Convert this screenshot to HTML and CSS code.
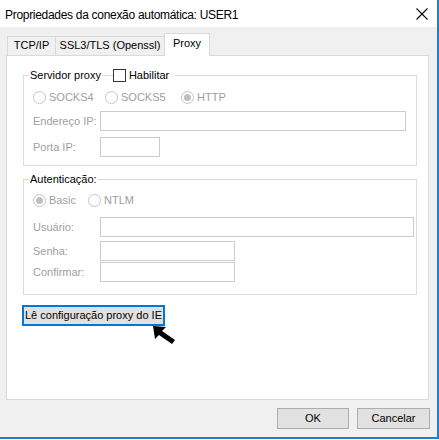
FILE: index.html
```html
<!DOCTYPE html>
<html lang="pt">
<head>
<meta charset="utf-8">
<title>Propriedades</title>
<link rel="stylesheet" href="styles.css">
</head>
<body>
<div class="window">
  <div class="titlebar">
    <span class="title">Propriedades da conexão automática: USER1</span>
    <svg class="close" width="12" height="12" viewBox="0 0 12 12"><path d="M0.5 0.5 L11.5 11.5 M11.5 0.5 L0.5 11.5" stroke="#000" stroke-width="1.1" fill="none"/></svg>
  </div>
  <div class="tabs">
    <div class="tab t1">TCP/IP</div>
    <div class="tab t2">SSL3/TLS (Openssl)</div>
    <div class="tab t3 active">Proxy</div>
  </div>
  <div class="panel">
    <fieldset class="group g1">
      <legend class="legend">
        <span class="lg-text">Servidor proxy</span>
        <span class="lg-line"></span>
        <span class="check"></span>
        <span class="lg-text lg-check">Habilitar</span>
      </legend>
      <div class="row radios r1">
        <span class="radio-item w72"><span class="radio"></span>SOCKS4</span>
        <span class="radio-item w76"><span class="radio"></span>SOCKS5</span>
        <span class="radio-item"><span class="radio checked"></span>HTTP</span>
      </div>
      <div class="row field f1"><span class="label">Endereço IP:</span><span class="input w306"></span></div>
      <div class="row field f2"><span class="label">Porta IP:</span><span class="input w60"></span></div>
    </fieldset>
    <fieldset class="group g2">
      <legend class="legend"><span class="lg-text">Autenticação:</span></legend>
      <div class="row radios r2">
        <span class="radio-item w55"><span class="radio checked"></span>Basic</span>
        <span class="radio-item"><span class="radio"></span>NTLM</span>
      </div>
      <div class="row field f3"><span class="label">Usuário:</span><span class="input w314"></span></div>
      <div class="row field f4"><span class="label">Senha:</span><span class="input w135"></span></div>
      <div class="row field f5"><span class="label">Confirmar:</span><span class="input w135"></span></div>
    </fieldset>
    <div class="ie-btn">Lê configuração proxy do IE</div>
  </div>
  <div class="footer">
    <div class="btn ok">OK</div>
    <div class="btn cancel">Cancelar</div>
  </div>
  <svg class="cursor" width="30" height="24" viewBox="0 0 30 24"><polygon points="4,3 17,4 13,8 26,17 23,21 10,12 6,16" fill="#000"/></svg>
</div>
</body>
</html>
```
FILE: styles.css
```css
html, body {
  margin: 0;
  padding: 0;
  background: #ffffff;
}
body {
  font-family: "Liberation Sans", Arial, sans-serif;
  font-size: 11px;
  color: #000;
}
.window {
  position: relative;
  width: 437px;
  height: 437px;
  background: #f0f0f0;
  border-right: 2px solid #1f7fd0;
  border-bottom: 2px solid #1f7fd0;
}
.titlebar {
  height: 27px;
  background: #ffffff;
  display: flex;
  align-items: center;
  justify-content: space-between;
  padding: 0 9px 0 5px;
  box-sizing: border-box;
  font-size: 12px;
}
.title { padding-top: 2px; letter-spacing: -0.3px; }
.close { display: block; margin-top: 1px; }
.tabs {
  display: flex;
  align-items: flex-end;
  height: 22px;
  margin-top: 6px;
  padding-left: 7px;
}
.tab {
  box-sizing: border-box;
  height: 19px;
  line-height: 17px;
  border: 1px solid #d9d9d9;
  border-bottom: none;
  background: #f0f0f0;
  margin-right: -1px;
  text-align: center;
}
.t1 { width: 49px; }
.t2 { width: 110px; }
.t3 { width: 46px; }
.tab.active {
  position: relative;
  z-index: 1;
  height: 23px;
  margin-bottom: -1px;
  background: #ffffff;
  line-height: 19px;
}
.panel {
  box-sizing: border-box;
  margin-left: 6px;
  width: 423px;
  height: 345px;
  border: 1px solid #d9d9d9;
  background: #ffffff;
  padding: 12px 0 0 16px;
}
.group {
  box-sizing: border-box;
  width: 394px;
  min-width: 0;
  margin: 0;
  padding: 0 0 0 9px;
  border: 1px solid #dcdcdc;
}
.g1 { padding-bottom: 8px; }
.g2 { margin-top: 6px; padding-bottom: 12px; }
.legend {
  display: flex;
  align-items: center;
  height: 14px;
  line-height: 14px;
  padding: 0 1px;
  margin-left: -4px;
}
.g1 .legend { padding-right: 6px; }
.lg-line {
  width: 11px;
  height: 1px;
  background: #dcdcdc;
  margin: 1px 0 0 1px;
}
.check {
  box-sizing: border-box;
  width: 13px;
  height: 13px;
  border: 1px solid #333333;
  background: #fff;
  margin-right: 3px;
}
.row {
  display: flex;
  align-items: center;
  color: #a0a0a0;
}
.radios { height: 14px; }
.r1 { margin-top: 8px; }
.r2 { margin-top: 7px; }
.radio-item {
  display: flex;
  align-items: center;
}
.w72 { width: 72px; }
.w76 { width: 76px; }
.w55 { width: 55px; }
.radio {
  box-sizing: border-box;
  width: 13px;
  height: 13px;
  border: 1px solid #c4c4c4;
  border-radius: 50%;
  margin-right: 3px;
  display: flex;
  align-items: center;
  justify-content: center;
}
.radio.checked::after {
  content: "";
  width: 7px;
  height: 7px;
  border-radius: 50%;
  background: #c0c0c0;
}
.field { height: 20px; }
.f1 { margin-top: 7px; }
.f2 { margin-top: 6px; }
.f3 { margin-top: 10px; }
.f4 { margin-top: 4px; }
.f5 { margin-top: 1px; }
.label { width: 67px; }
.input {
  box-sizing: border-box;
  height: 20px;
  border: 1px solid #cccccc;
  background: #fff;
}
.w306 { width: 306px; }
.w60 { width: 60px; }
.w314 { width: 314px; }
.w135 { width: 135px; }
.ie-btn {
  box-sizing: border-box;
  margin: 10px 0 0 -1px;
  width: 143px;
  height: 21px;
  border: 2px solid #0078d7;
  background: #e1e1e1;
  line-height: 17px;
  padding-left: 1px;
  white-space: nowrap;
}
.footer {
  display: flex;
  justify-content: flex-end;
  gap: 8px;
  padding: 8px 7px 0 0;
}
.btn {
  box-sizing: border-box;
  height: 21px;
  border: 1px solid #adadad;
  background: #e1e1e1;
  text-align: center;
  line-height: 19px;
}
.ok { width: 72px; }
.cancel { width: 73px; }
.cursor {
  position: absolute;
  left: 149px;
  top: 323px;
}
```
